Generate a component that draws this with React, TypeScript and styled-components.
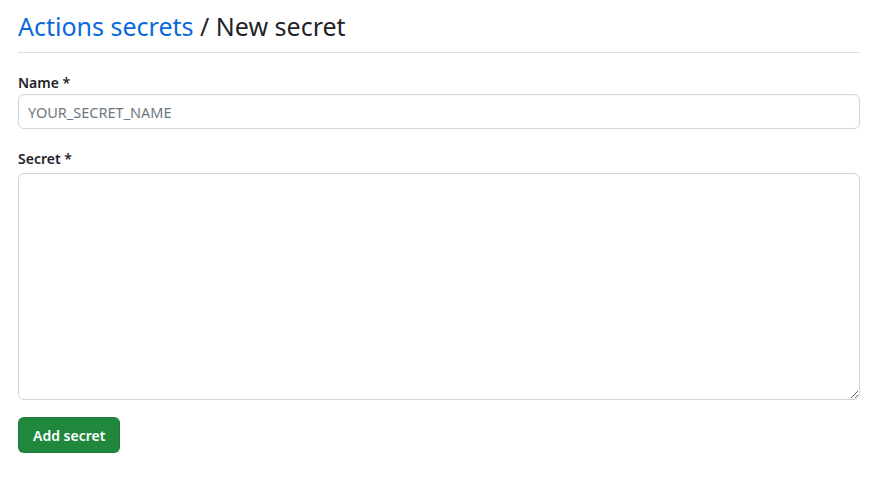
import React from "react";
import styled, { createGlobalStyle } from "styled-components";

const GlobalStyle = createGlobalStyle`
  body {
    margin: 0;
    background: #ffffff;
    font-family: "Noto Sans", "Open Sans", "Liberation Sans", sans-serif;
    color: #1f2328;
  }
`;

const App = () => {
  return (
    <>
      <GlobalStyle />
      <Page>
        <Header>
          <Title>
            <Crumb href="#">Actions secrets</Crumb> / New secret
          </Title>
        </Header>
        <Form onSubmit={(e) => e.preventDefault()}>
          <Field $spacing={20}>
            <Label htmlFor="secret-name" $gap={1}>
              Name *
            </Label>
            <Input id="secret-name" placeholder="YOUR_SECRET_NAME" />
          </Field>
          <Field $spacing={17}>
            <Label htmlFor="secret-value" $gap={4}>
              Secret *
            </Label>
            <TextArea id="secret-value" />
          </Field>
          <SubmitButton type="submit">Add secret</SubmitButton>
        </Form>
      </Page>
    </>
  );
};

const Page = styled.div`
  padding: 8px 21px 0 18px;
`;

const Header = styled.div`
  border-bottom: 1px solid #d8dee4;
  padding-bottom: 8px;
  margin-bottom: 20px;
`;

const Title = styled.h2`
  margin: 0;
  font-size: 25px;
  font-weight: 400;
  line-height: 36px;
  color: #1f2328;
`;

const Crumb = styled.a`
  color: #0969da;
  text-decoration: none;
`;

const Form = styled.form`
  display: flex;
  flex-direction: column;
`;

const Field = styled.div<{ $spacing: number }>`
  display: flex;
  flex-direction: column;
  margin-bottom: ${(p) => p.$spacing}px;
`;

const Label = styled.label<{ $gap: number }>`
  font-size: 14px;
  font-weight: 600;
  line-height: 20px;
  margin-bottom: ${(p) => p.$gap}px;
  color: #1f2328;
`;

const Input = styled.input`
  box-sizing: border-box;
  height: 35px;
  padding: 5px 9px;
  font-family: inherit;
  font-size: 14.5px;
  color: #1f2328;
  border: 1px solid #d0d7de;
  border-radius: 6px;
  background: #ffffff;
  box-shadow: inset 0 1px 0 rgba(208, 215, 222, 0.2);
  outline: none;
  &::placeholder {
    color: #6e7781;
  }
`;

const TextArea = styled.textarea`
  box-sizing: border-box;
  height: 227px;
  padding: 8px 12px;
  font-family: inherit;
  font-size: 14px;
  border: 1px solid #d0d7de;
  border-radius: 6px;
  box-shadow: inset 0 1px 0 rgba(208, 215, 222, 0.2);
  outline: none;
  resize: vertical;
`;

const SubmitButton = styled.button`
  align-self: flex-start;
  height: 36px;
  padding: 0 14px;
  font-family: inherit;
  font-size: 14px;
  font-weight: 600;
  color: #ffffff;
  background-color: #1f883d;
  border: 1px solid rgba(31, 35, 40, 0.15);
  border-radius: 6px;
  box-shadow: 0 1px 0 rgba(31, 35, 40, 0.1);
  cursor: pointer;
`;

export default App;
